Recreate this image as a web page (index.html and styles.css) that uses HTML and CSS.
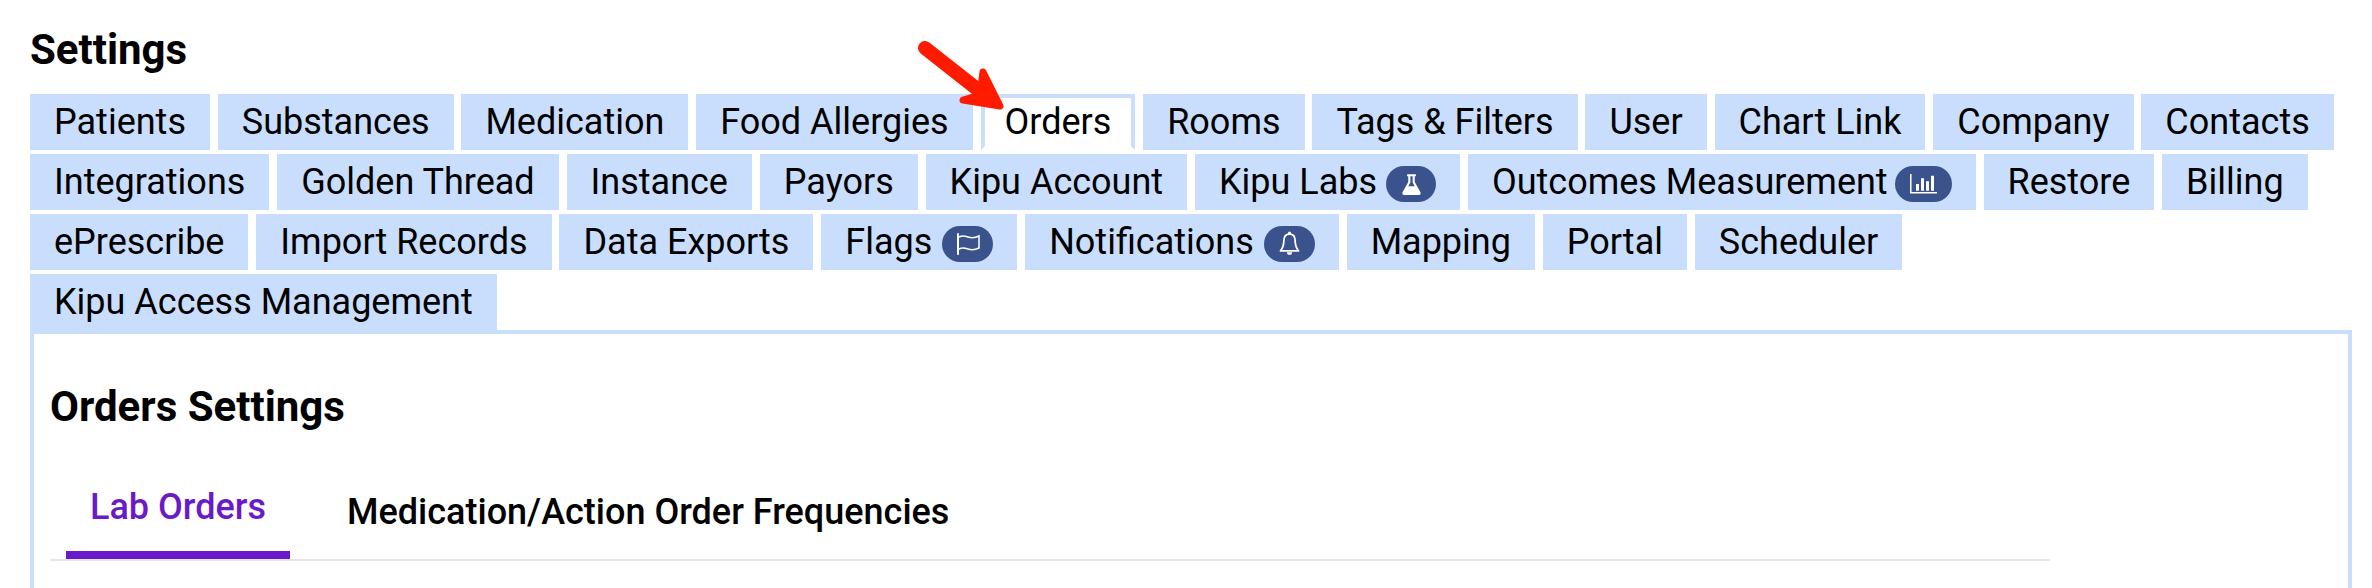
FILE: index.html
```html
<!DOCTYPE html>
<html lang="en">
<head>
  <meta charset="UTF-8" />
  <title>Settings</title>
  <link rel="stylesheet" href="styles.css">
</head>
<body>
  <h1 class="page-title">Settings</h1>

  <div class="tabs">
    <a class="tab">Patients</a>
    <a class="tab">Substances</a>
    <a class="tab">Medication</a>
    <a class="tab">Food Allergies</a>
    <a class="tab active">Orders</a>
    <a class="tab">Rooms</a>
    <a class="tab">Tags &amp; Filters</a>
    <a class="tab">User</a>
    <a class="tab">Chart Link</a>
    <a class="tab">Company</a>
    <a class="tab">Contacts</a>
    <a class="tab">Integrations</a>
    <a class="tab">Golden Thread</a>
    <a class="tab">Instance</a>
    <a class="tab">Payors</a>
    <a class="tab">Kipu Account</a>
    <a class="tab">Kipu Labs
      <span class="badge badge-labs">
        <svg width="21" height="21" viewBox="0 0 24 24"><path d="M7 1.500h10M9.500 2v7.500L3 21c-.6 1.300 0 2 1.300 2h15.400c1.300 0 1.900-.7 1.300-2L14.500 9.500V2" fill="none" stroke="#fff" stroke-width="2.400"/><path d="M6.500 14h11l4 9H2.500z" fill="#fff"/></svg>
      </span>
    </a>
    <a class="tab">Outcomes Measurement
      <span class="badge badge-wide">
        <svg width="27" height="20" viewBox="0 0 27 20"><path d="M.8 0v18.700H27" fill="none" stroke="#fff" stroke-width="1.500"/><path d="M6 10h3v6.700H6zM11 4.300h3v12.400h-3zM16 7.300h3v9.400h-3zM21 1.700h3v15h-3z" fill="#fff"/></svg>
      </span>
    </a>
    <a class="tab">Restore</a>
    <a class="tab">Billing</a>
    <a class="tab">ePrescribe</a>
    <a class="tab">Import Records</a>
    <a class="tab">Data Exports</a>
    <a class="tab">Flags
      <span class="badge">
        <svg width="24" height="22" viewBox="0 0 24 22"><path d="M2 1v20" fill="none" stroke="#fff" stroke-width="2" stroke-linecap="round"/><path d="M3 4c4-2 6-1 9 0s7 1 11-1v12c-4 2-8 2-11 1s-5-2-9 0" fill="none" stroke="#fff" stroke-width="1.500"/></svg>
      </span>
    </a>
    <a class="tab">Notifications
      <span class="badge">
        <svg width="21" height="26" viewBox="0 0 24 30"><path d="M12 3.500c-4.500 0-6.500 3.500-6.500 7.500 0 6-1.500 9-4 12h21c-2.500-3-4-6-4-12 0-4-2-7.500-6.500-7.500z" fill="none" stroke="#fff" stroke-width="2" stroke-linejoin="round"/><circle cx="12" cy="2.500" r="1.800" fill="#fff"/><path d="M9 24.500a3 3 0 0 0 6 0z" fill="#fff"/></svg>
      </span>
    </a>
    <a class="tab">Mapping</a>
    <a class="tab">Portal</a>
    <a class="tab">Scheduler</a>
    <a class="tab">Kipu Access Management</a>
  </div>

  <div class="panel">
    <h2 class="panel-title">Orders Settings</h2>
    <div class="subtabs">
      <a class="subtab active">Lab Orders</a>
      <a class="subtab">Medication/Action Order Frequencies</a>
    </div>
  </div>

  <svg class="arrow" width="100" height="80" viewBox="0 0 100 80">
    <path d="M7 8 L68 56" fill="none" stroke="#ff1a00" stroke-width="14" stroke-linecap="round"/>
    <path d="M65 32 L82 66 L45 60 L62 55 Z" fill="#ff1a00" stroke="#ff1a00" stroke-width="7" stroke-linejoin="round"/>
  </svg>
</body>
</html>
```

FILE: styles.css
```css
:root {
  --tab: #c9defd;
  --badge: #3b538c;
  --purple: #6b1ac7;
  --line: #e5e5ec;
}

body {
  font-family: Roboto, 'Liberation Sans', sans-serif;
  margin: 0;
  padding: 26px 0 0 30px;
  height: 588px;
  box-sizing: border-box;
  overflow: hidden;
  background-color: #fff;
  color: #000;
  position: relative;
}

.page-title {
  margin: 0 0 20px;
  font-size: 42px;
  line-height: 48px;
  font-weight: 700;
}

.tabs {
  display: flex;
  flex-wrap: wrap;
  gap: 4px 7.85px;
  width: 2336px;
}

.tab {
  display: flex;
  align-items: center;
  gap: 10px;
  height: 56px;
  padding: 0 24px;
  box-sizing: border-box;
  background-color: var(--tab);
  font-size: 36px;
  cursor: pointer;
}

.tab.active {
  background-color: #fff;
  padding: 0 20px;
  border: 4px solid var(--tab);
  border-bottom-color: #fff;
}

.badge {
  display: flex;
  align-items: center;
  justify-content: center;
  width: 51px;
  height: 36px;
  margin-top: 4px;
  border-radius: 18px;
  background-color: var(--badge);
}

.badge-labs {
  width: 50px;
  margin-left: -1px;
}

.badge-wide {
  width: 57px;
  margin-left: -3px;
}

.panel {
  width: 2322px;
  height: 258px;
  box-sizing: border-box;
  border: 4px solid var(--tab);
  border-bottom: 0;
  padding: 0 298px 0 16px;
}

.panel-title {
  margin: 49px 0 0;
  font-size: 42px;
  line-height: 48px;
  font-weight: 700;
}

.subtabs {
  display: flex;
  gap: 33px;
  margin-top: 42px;
  border-bottom: 2px solid var(--line);
  padding-left: 16px;
}

.subtab {
  display: flex;
  align-items: center;
  height: 86px;
  box-sizing: border-box;
  padding: 0 24px 9px;
  font-size: 36px;
  font-weight: 500;
  cursor: pointer;
}

.subtab.active {
  color: var(--purple);
  padding-bottom: 10px;
  border-bottom: 8px solid var(--purple);
}

.arrow {
  position: absolute;
  left: 918px;
  top: 40px;
}
```
